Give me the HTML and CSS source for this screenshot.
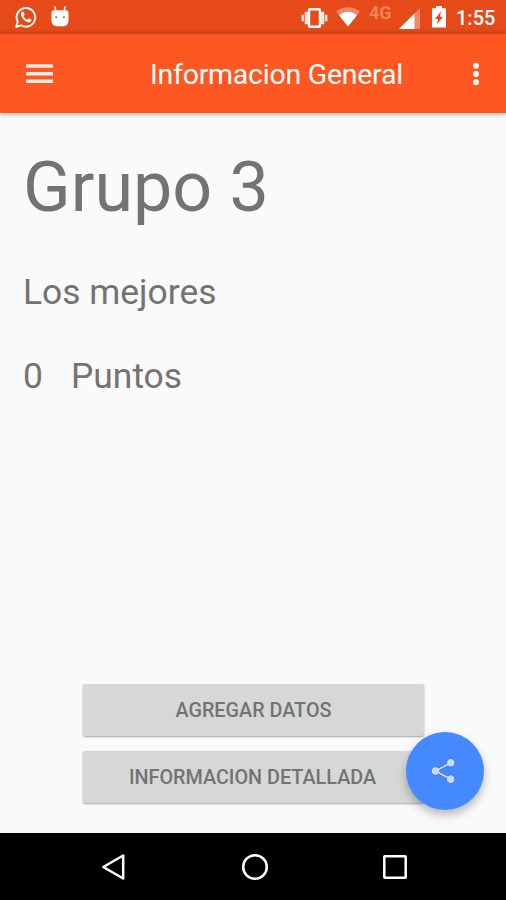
FILE: index.html
```
<!DOCTYPE html>
<html lang="es">
<head>
  <meta charset="UTF-8" />
  <meta name="viewport" content="width=device-width, initial-scale=1.0" />
  <title>Informacion General</title>
  <link rel="stylesheet" href="styles.css">
</head>
<body>
  <div class="status-bar">
    <svg class="whatsapp" width="22" height="22" viewBox="0 0 22 22">
      <path d="M1.2 20.8 L2.7 15.6 A9.3 9.3 0 1 1 6.2 19.3 Z" fill="none" stroke="#fff" stroke-width="1.9" stroke-linejoin="round" />
      <path d="M7.5 5.7 C6 6.4 5.6 8 6.2 9.7 C7.4 13 10.2 15.7 13.5 16.2 C15.2 16.4 16.5 15.4 16.6 13.8 L13.9 12.3 L12.5 13.8 C10.5 13 9.2 11.6 8.5 10 L9.7 8.6 L8.6 5.8 Z" fill="#fff" />
    </svg>
    <svg class="robot" width="18" height="21" viewBox="0 0 18 21">
      <path d="M4.7 4.5 L4 .8 M13.3 4.5 L14 .8" stroke="#fff" stroke-width="1.5" stroke-linecap="round" />
      <path d="M3 4.2 H15 Q17.5 4.2 17.5 7 V14 Q17.5 20.3 11.5 20.3 H6.5 Q.5 20.3 .5 14 V7 Q.5 4.2 3 4.2 Z" fill="#fff" />
      <circle cx="5.2" cy="11.3" r="1" fill="#e64a19" />
      <circle cx="13" cy="11.3" r="1" fill="#e64a19" />
    </svg>
    <svg class="vibrate" width="27" height="20" viewBox="0 0 27 20">
      <rect x="8" y="1.3" width="11" height="17.4" rx="1" fill="none" stroke="#fff" stroke-width="2.4" />
      <path d="M5.3 3.8 V16.2 M21.7 3.8 V16.2" stroke="#fff" stroke-opacity=".85" stroke-width="3.2" />
      <path d="M1.8 6.8 V13.2 M25.2 6.8 V13.2" stroke="#fff" stroke-opacity=".85" stroke-width="2.4" />
    </svg>
    <svg class="wifi" width="24" height="20" viewBox="0 0 24 20">
      <path d="M0 4.6 Q12 -4 24 4.6 L12 19.5 Z" fill="#fff" fill-opacity=".35" />
      <path d="M3 8.2 Q12 1.5 21 8.2 L12 19.5 Z" fill="#fff" />
    </svg>
    <span class="network">4G</span>
    <svg class="signal" width="21" height="21" viewBox="0 0 21 21">
      <path d="M0 21 L21 0 V21 Z" fill="#fff" fill-opacity=".35" />
      <path d="M0 21 L15.5 5.5 V21 Z" fill="#fff" />
    </svg>
    <svg class="battery" width="14" height="22" viewBox="0 0 14 22">
      <path d="M4 0 H10 V2.2 H14 V21.5 H0 V2.2 H4 Z" fill="#fff" />
      <path d="M9.2 5 L3 13 H6.2 L4.8 18.6 L11 10.7 H7.8 Z" fill="#e64a19" />
    </svg>
    <span class="clock">1:55</span>
  </div>

  <header class="toolbar">
    <svg class="menu" width="27" height="20" viewBox="0 0 27 20">
      <path d="M0 2 H27 M0 9.7 H27 M0 17.3 H27" stroke="#fff" stroke-opacity=".87" stroke-width="3.4" />
    </svg>
    <h1>Informacion General</h1>
    <svg class="more" width="8" height="24" viewBox="0 0 8 24">
      <circle cx="4" cy="3.7" r="3" fill="#fff" />
      <circle cx="4" cy="12" r="3" fill="#fff" />
      <circle cx="4" cy="20.3" r="3" fill="#fff" />
    </svg>
  </header>

  <main>
    <h2>Grupo 3</h2>
    <p class="slogan">Los mejores</p>
    <p class="points"><span class="count">0</span><span>Puntos</span></p>

    <div class="buttons">
      <button type="button" class="add">AGREGAR DATOS</button>
      <button type="button" class="detail">INFORMACION DETALLADA</button>
    </div>

    <div class="fab">
      <svg width="26" height="28" viewBox="0 0 26 28">
        <path d="M20.7 5.8 L5.5 14 L20.7 22.2" fill="none" stroke="#356cc6" stroke-width="3.2" />
        <g fill="#c5dafd" stroke="#356cc6" stroke-width=".8">
          <circle cx="20.7" cy="5.8" r="4.3" />
          <circle cx="5.5" cy="14" r="4.3" />
          <circle cx="20.7" cy="22.2" r="4.3" />
        </g>
        <path d="M20.7 5.8 L5.5 14 L20.7 22.2" fill="none" stroke="#c5dafd" stroke-width="1.9" />
      </svg>
    </div>
  </main>

  <nav>
    <svg width="26" height="28" viewBox="0 0 26 28">
      <path d="M2.3 14 L22.2 2.5 V25.5 Z" fill="none" stroke="#fff" stroke-width="2.5" stroke-linejoin="round" />
    </svg>
    <svg width="28" height="28" viewBox="0 0 28 28">
      <circle cx="14" cy="14" r="11.8" fill="none" stroke="#fff" stroke-width="2.5" />
    </svg>
    <svg width="26" height="26" viewBox="0 0 26 26">
      <rect x="2.3" y="2.3" width="21.4" height="21.4" rx=".5" fill="none" stroke="#fff" stroke-width="2.5" />
    </svg>
  </nav>
</body>
</html>
```
FILE: styles.css
```
* {
  box-sizing: border-box;
}
body {
  margin: 0;
  height: 900px;
  display: flex;
  flex-direction: column;
  font-family: Roboto, sans-serif;
  background: #fafafa;
  color: #737373;
  overflow: hidden;
}
h1, h2, p {
  margin: 0;
  font-weight: 400;
}
svg {
  display: block;
  flex: none;
}
.status-bar {
  height: 33px;
  display: flex;
  align-items: flex-start;
  padding: 6px 11px 0 15px;
  background: #e64a19;
  color: white;
}
.robot {
  margin-left: 14px;
}
.vibrate {
  margin: 2px 0 0 auto;
}
.wifi {
  margin: 1px 0 0 8px;
}
.network {
  width: 25px;
  margin: -2px 0 0 9px;
  font-size: 18px;
  font-weight: 700;
  line-height: 18px;
  color: #f0845f;
}
.signal {
  margin: 2px 0 0 5px;
}
.battery {
  margin-left: 12px;
}
.clock {
  width: 39px;
  margin-left: 10px;
  font-size: 20px;
  font-weight: 500;
  line-height: 25px;
}
.toolbar {
  height: 80px;
  display: flex;
  align-items: center;
  padding: 1px 26px 0 26px;
  background: #ff5722;
  color: white;
  box-shadow: inset 0 2px 1px -1px rgba(0,0,0,0.2), 0 1px 5px rgba(0,0,0,0.35);
  z-index: 1;
}
.toolbar h1 {
  margin: 2px 0 0 97px;
  font-size: 28.5px;
  line-height: 34px;
  letter-spacing: -0.25px;
  white-space: nowrap;
}
.more {
  margin-left: auto;
}
main {
  position: relative;
  height: 720px;
  display: flex;
  flex-direction: column;
  padding: 33px 24px 0 23px;
}
h2 {
  font-size: 70px;
  line-height: 82px;
}
.slogan, .points {
  font-size: 35.4px;
  line-height: 42px;
}
.slogan {
  margin-top: 43px;
}
.points {
  display: flex;
  margin-top: 42px;
}
.count {
  width: 48px;
}
.buttons {
  display: flex;
  flex-direction: column;
  gap: 15px;
  width: 341px;
  margin: auto 0 30px 60px;
}
button {
  height: 52px;
  padding: 0;
  border: none;
  border-radius: 2px;
  background: #d6d7d7;
  color: #737373;
  font-family: inherit;
  font-size: 19.8px;
  font-weight: 500;
  box-shadow: 0 1px 2px rgba(0,0,0,0.35);
}
.detail {
  padding-right: 2px;
}
.fab {
  position: absolute;
  right: 22px;
  bottom: 23px;
  width: 78px;
  height: 78px;
  display: flex;
  align-items: center;
  justify-content: center;
  padding-right: 4px;
  border-radius: 50%;
  background: #4489ff;
  box-shadow: 0 5px 10px rgba(0,0,0,0.27);
}
nav {
  height: 67px;
  display: flex;
  align-items: center;
  justify-content: space-between;
  padding: 1px 98px 0 101px;
  background: black;
  z-index: 1;
}
```
